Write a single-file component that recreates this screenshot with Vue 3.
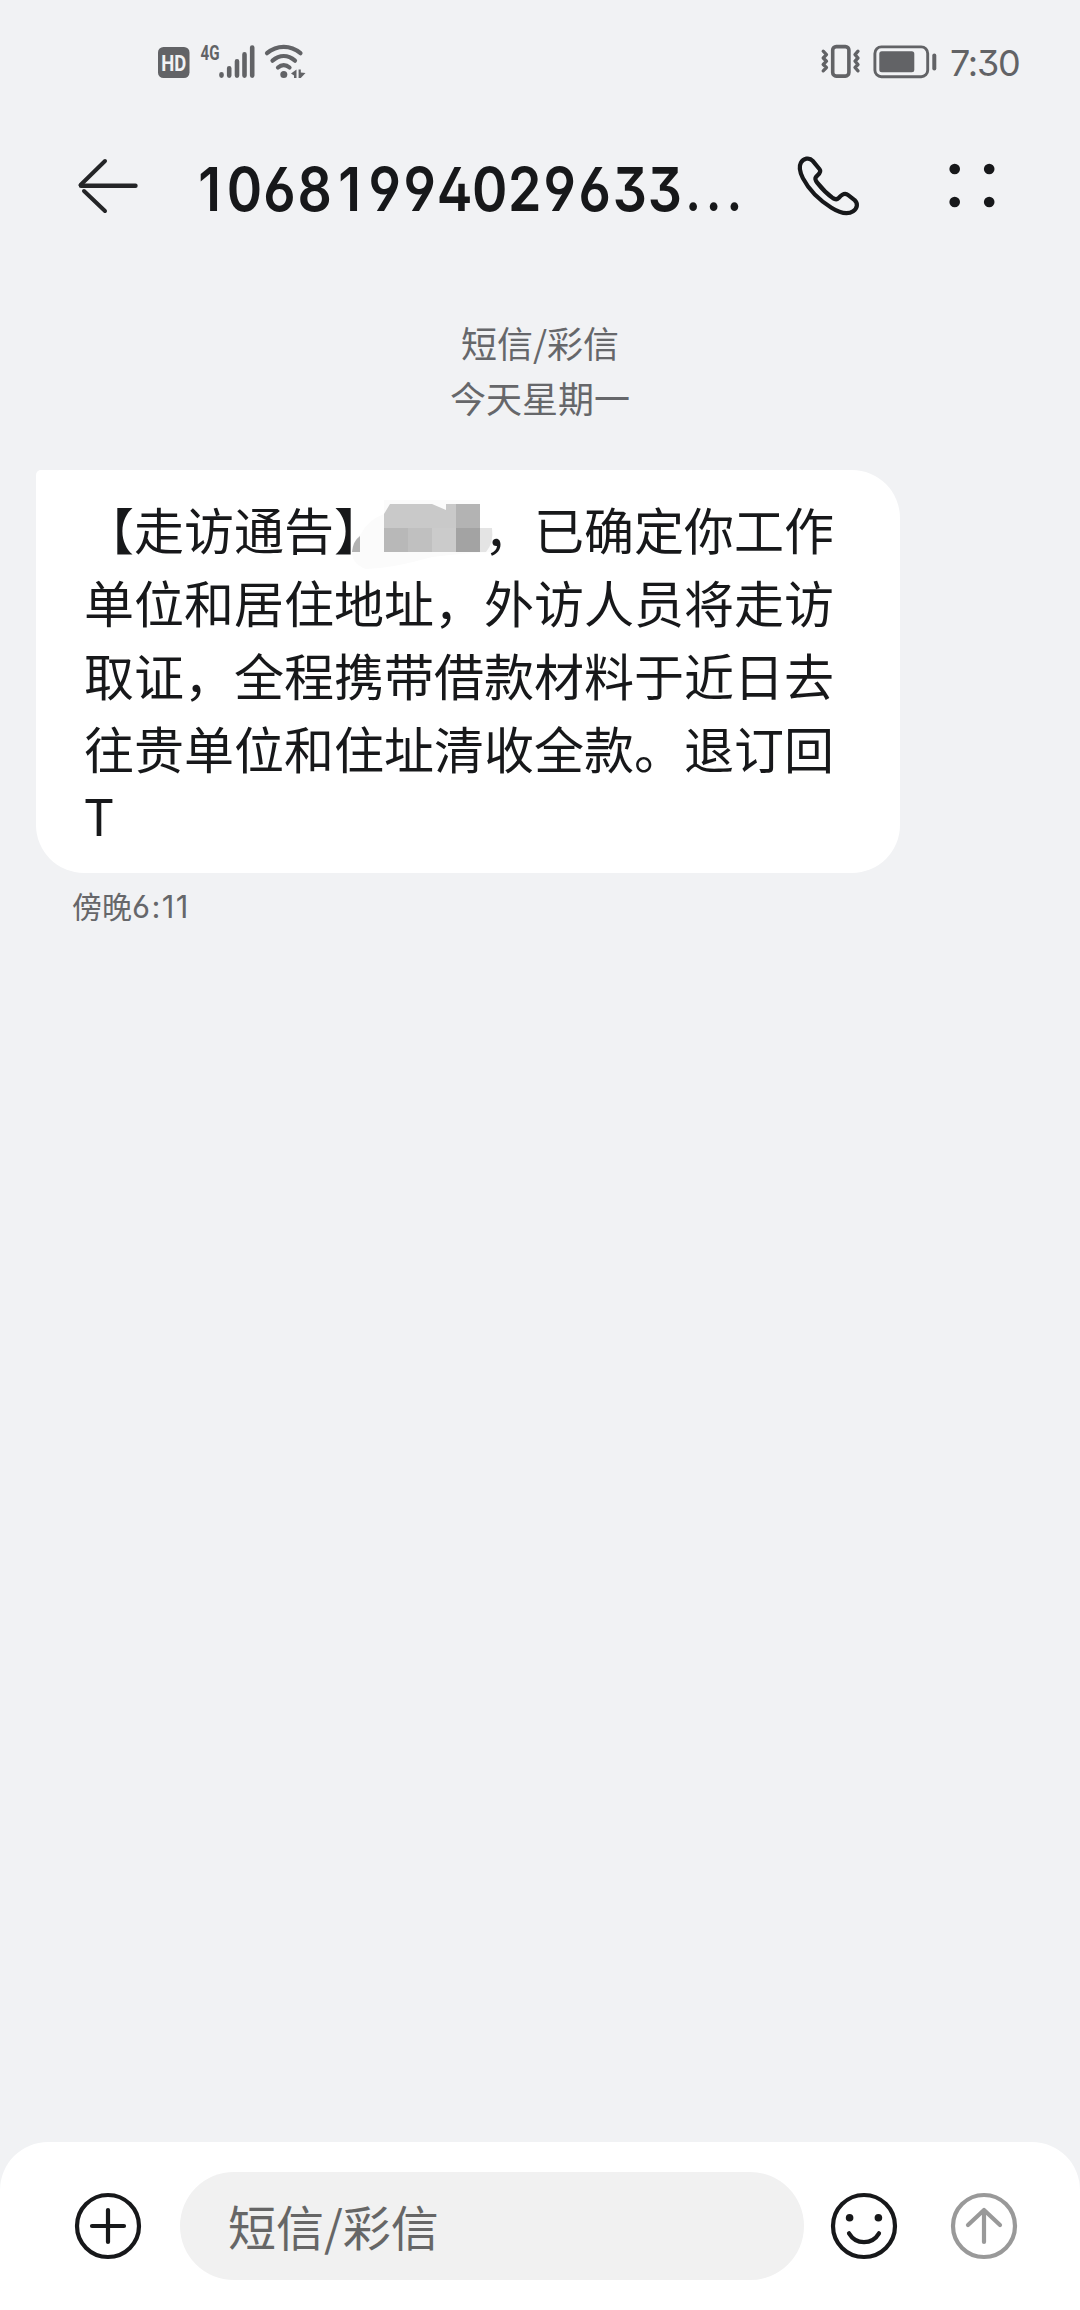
<script setup>
const number = '10681994029633'
const lines = ['单位和居住地址，外访人员将走访', '取证，全程携带借款材料于近日去', '往贵单位和住址清收全款。退订回']
</script>

<template>
  <div class="screen">
    <div class="status">
      <svg class="status-left" width="152" height="40" viewBox="0 0 152 40">
        <rect x="2" y="4" width="31.5" height="31" rx="5.5" fill="#626366" />
        <text x="17.8" y="27.6" class="hd" text-anchor="middle" textLength="25" lengthAdjust="spacingAndGlyphs">HD</text>
        <text x="44.5" y="17" class="net" textLength="19" lengthAdjust="spacingAndGlyphs">4G</text>
        <g stroke="#626366" stroke-width="4.6" stroke-linecap="round">
          <path d="M65.5 31.3V32.6M73.2 25.2V32.6M81 18.3V32.6M88.5 11.4V32.6M96.2 4.6V32.6" />
        </g>
        <g fill="none" stroke="#626366" stroke-width="4.2" stroke-linecap="round">
          <path d="M111 10.2C121 1.7 134.5 1.7 144.5 10.2M116.5 17.7C123.5 11.7 132 11.7 139 17.7M122 24.5C125.5 21.4 130 21.4 133.5 24.5" />
        </g>
        <circle cx="127.8" cy="31.6" r="3.5" fill="#626366" />
        <path d="M140.5 26.5V35H138V32.5L135 30.5ZM142.6 26.5V35H144.8L149.5 30L144.8 29.5V26.5Z" fill="#626366" />
      </svg>
      <svg class="status-right" width="120" height="40" viewBox="0 0 120 40">
        <rect x="13.7" y="3.6" width="16.2" height="29.5" rx="3.5" fill="none" stroke="#626366" stroke-width="3.6" />
        <path d="M4.2 8.2L7.5 11.6L4.2 15L7.5 18.2L4.2 21.5L7.5 24.5L4.2 27.8M39 8.2L36 11.6L39 15L36 18.2L39 21.5L36 24.5L39 27.8" fill="none" stroke="#626366" stroke-width="3.3" stroke-linecap="round" stroke-linejoin="round" />
        <rect x="55.9" y="3.9" width="52.8" height="29.8" rx="6.5" fill="none" stroke="#626366" stroke-width="2.9" />
        <rect x="60.3" y="8.3" width="35" height="21" rx="2.5" fill="#626366" />
        <rect x="113.3" y="10.5" width="4" height="17" rx="2" fill="#626366" />
      </svg>
      <span class="clock">7:30</span>
    </div>

    <header class="header">
      <svg class="back" width="64" height="64" viewBox="0 0 64 64" fill="none" stroke="#242527" stroke-linecap="round">
        <path d="M5 31.8H59.5" stroke-width="4.4" />
        <path d="M4.5 31L29 7M8 37L29 57" stroke-width="4" />
      </svg>
      <h1 class="number"><span class="digits"><span v-for="(digit, i) in number" :key="i" class="digit">{{ digit }}</span><span class="dots">...</span></span></h1>
      <svg class="phone" width="72" height="72" viewBox="-0.5 -0.5 73 73">
        <path d="M8.5 12.5C11 8 17 6.5 20.5 10.5L27.5 19C30 22 25.5 24.8 23.6 27.2C22.5 28.8 23.5 30.6 25 32.6C30 39 35.5 44.3 41 48.3C43.2 49.7 45 50 46.8 48.2C49.5 45.2 52.5 42.2 56.5 45.2L63 50.3C66.5 53.5 66 58.5 61.5 61.5C55.5 65.5 47.5 63 39.5 58C27.5 50.5 16.5 39.5 10.5 28C7.5 22 6 17 8.5 12.5Z" fill="none" stroke="#17181a" stroke-width="4.3" stroke-linejoin="round" />
      </svg>
      <svg class="more" width="50" height="50" viewBox="0 0 50 50" fill="#17181a">
        <circle cx="7.7" cy="8" r="5.3" /><circle cx="42.2" cy="8" r="5.3" />
        <circle cx="7.7" cy="41" r="5.3" /><circle cx="42.2" cy="41" r="5.3" />
      </svg>
    </header>

    <main class="thread">
      <div class="meta">短信/彩信</div>
      <div class="meta">今天星期一</div>
      <div class="bubble">
        <div class="line first">
          <span>【走访通告】</span>
          <svg class="mosaic" width="160" height="73" viewBox="0 0 160 73">
            <path d="M18 52Q20 38 27 34Q34 20 50 14V0H146V28L158 30V52Q130 53 98 57Q60 68 32 69Q18 64 18 52Z" fill="#fbfbfb" />
            <path d="M18 52Q19 41 26 36V52Z" fill="#b2b2b2" />
            <path d="M146 28H158Q160 43 152 52H146Z" fill="#e4e4e4" />
            <path d="M50 28V14L56 4H98L112 10V4H122V28Z" fill="#c9c9c9" />
            <path d="M50 28H74V52H50Z" fill="#b8b8b8" /><path d="M74 28H98V52H74Z" fill="#c0c0c0" />
            <path d="M98 28H122V52H98Z" fill="#cbcbcb" />
            <path d="M122 4H146V28H122Z" fill="#b3b3b3" /><path d="M122 28H146V52H122Z" fill="#a3a3a3" />
          </svg>
          <span>，已确定你工作</span>
        </div>
        <div v-for="line in lines" :key="line" class="line">{{ line }}</div>
        <div class="line last">T</div>
      </div>
      <div class="sent">傍晚<span>6:11</span></div>
    </main>

    <footer class="composer">
      <svg class="icon" width="72" height="72" viewBox="0 0 72 72" fill="none" stroke="#17181a" stroke-width="4.2" stroke-linecap="round">
        <circle cx="36" cy="36" r="31" /><path d="M36 20V52M20 36H52" />
      </svg>
      <div class="field">短信/彩信</div>
      <svg class="icon" width="72" height="72" viewBox="0 0 72 72" fill="none" stroke="#17181a" stroke-width="4.2" stroke-linecap="round">
        <circle cx="36" cy="36" r="31" /><path d="M21 43.3C28 55 44 55 51 43.3" />
        <circle cx="21.6" cy="27.7" r="3.8" fill="#17181a" stroke="none" /><circle cx="50.4" cy="27.7" r="3.8" fill="#17181a" stroke="none" />
      </svg>
      <svg class="icon send" width="72" height="72" viewBox="0 0 72 72" fill="none" stroke="#999" stroke-width="4.2" stroke-linecap="round" stroke-linejoin="round">
        <circle cx="36" cy="36" r="31" /><path d="M36 52V20M20 35L36 20L52 35" />
      </svg>
    </footer>
  </div>
</template>

<style>
body { margin: 0; background: #f1f2f4; }
</style>

<style scoped>
.screen {
  width: 1080px;
  height: 2310px;
  display: flex;
  flex-direction: column;
  overflow: hidden;
  background: #f1f2f4;
  color: #17181a;
  font-family: "Noto Sans CJK SC", sans-serif;
}
.status {
  height: 124px;
  flex: none;
  display: flex;
  align-items: flex-start;
  box-sizing: border-box;
  padding: 43px 0 0 156px;
}
.status-left { overflow: visible; }
.status-right { margin-left: 511px; }
.hd { font: 700 22px Roboto, sans-serif; fill: #f1f2f4; }
.net { font: 700 21px Roboto, sans-serif; fill: #626366; }
.clock {
  margin-left: 11px;
  line-height: 41px;
  font-family: Inter, sans-serif;
  font-size: 36px;
  font-weight: 400;
  letter-spacing: -1.3px;
  font-feature-settings: "ss01";
  color: #626366;
}
.header {
  height: 124px;
  flex: none;
  display: flex;
  align-items: center;
  padding-left: 76px;
}
.number {
  margin: 5px 0 0 52px;
  width: 600px;
  font-family: Inter, sans-serif;
  font-size: 61px;
  font-weight: 600;
  line-height: 72px;
  font-feature-settings: "ss01";
  white-space: nowrap;
}
.digits {
  display: inline-flex;
  transform: scaleX(0.88);
  transform-origin: left;
}
.digit { width: 39.8px; display: flex; justify-content: center; }
.dots { margin-left: 3px; letter-spacing: 5px; font-weight: 500; }
.phone { flex: none; }
.more { margin-left: 83px; }
.thread { flex: 1; padding: 67px 36px 0; }
.meta {
  height: 55px;
  line-height: 55px;
  font-size: 36px;
  text-align: center;
  color: #66676a;
}
.bubble {
  width: 864px;
  height: 403px;
  margin-top: 45px;
  padding: 22px 48px 0;
  box-sizing: border-box;
  border-radius: 5px 48px 48px 48px;
  background: #fff;
  font-size: 50px;
  white-space: nowrap;
}
.line { height: 73px; line-height: 73px; }
.first { display: flex; }
.mosaic { flex: none; margin: 8px -10px 0 -50px; }
.last { height: 68px; line-height: 60px; }
.sent {
  margin: 10px 0 0 36px;
  line-height: 44px;
  font-size: 30px;
  color: #66676a;
}
.sent span {
  font-family: Inter, sans-serif;
  font-feature-settings: "ss01";
  font-size: 31px;
  letter-spacing: 1.4px;
}
.composer {
  height: 168px;
  flex: none;
  display: flex;
  align-items: center;
  box-sizing: border-box;
  padding: 0 60px 0 72px;
  border-radius: 48px 48px 0 0;
  background: #fff;
}
.field {
  width: 624px;
  height: 108px;
  margin: 0 24px 0 36px;
  box-sizing: border-box;
  padding-left: 48px;
  border-radius: 54px;
  background: #f1f1f1;
  color: #666;
  font-size: 48px;
  line-height: 106px;
}
.send { margin-left: 48px; }
</style>
